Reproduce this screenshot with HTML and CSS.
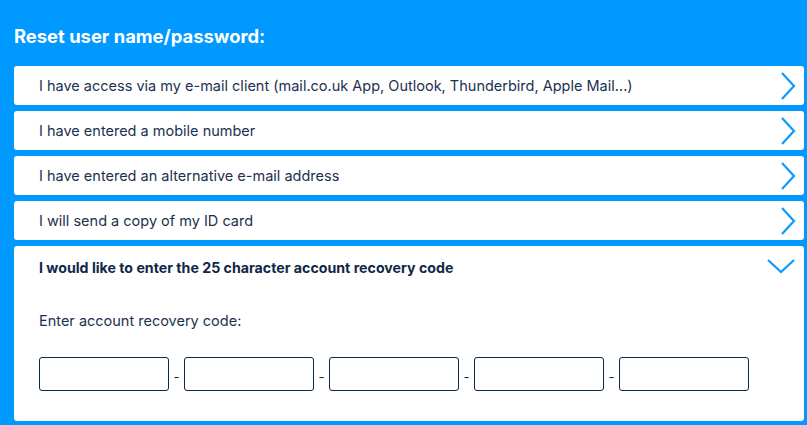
FILE: index.html
```html
<!DOCTYPE html>
<html>
<head>
<meta charset="utf-8">
<link rel="stylesheet" href="styles.css">
</head>
<body>
<div class="page">
  <h1 class="title">Reset user name/password:</h1>
  <div class="list">
    <div class="row">
      <span class="label">I have access via my e-mail client (mail.co.uk App, Outlook, Thunderbird, Apple Mail...)</span>
      <svg class="chev" width="16" height="28" viewBox="0 0 16 28"><path d="M2 1 L14 14 L2 27" fill="none" stroke="#0a9bff" stroke-width="2.2"/></svg>
    </div>
    <div class="row">
      <span class="label">I have entered a mobile number</span>
      <svg class="chev" width="16" height="28" viewBox="0 0 16 28"><path d="M2 1 L14 14 L2 27" fill="none" stroke="#0a9bff" stroke-width="2.2"/></svg>
    </div>
    <div class="row">
      <span class="label">I have entered an alternative e-mail address</span>
      <svg class="chev" width="16" height="28" viewBox="0 0 16 28"><path d="M2 1 L14 14 L2 27" fill="none" stroke="#0a9bff" stroke-width="2.2"/></svg>
    </div>
    <div class="row">
      <span class="label">I will send a copy of my ID card</span>
      <svg class="chev" width="16" height="28" viewBox="0 0 16 28"><path d="M2 1 L14 14 L2 27" fill="none" stroke="#0a9bff" stroke-width="2.2"/></svg>
    </div>
    <div class="panel">
      <div class="panel-head">
        <span class="label bold">I would like to enter the 25 character account recovery code</span>
        <svg class="chev-down" width="28" height="16" viewBox="0 0 28 16"><path d="M1 2 L14 14 L27 2" fill="none" stroke="#0a9bff" stroke-width="2.2"/></svg>
      </div>
      <p class="prompt">Enter account recovery code:</p>
      <div class="code">
        <input class="box" type="text"><span class="dash">-</span>
        <input class="box" type="text"><span class="dash">-</span>
        <input class="box" type="text"><span class="dash">-</span>
        <input class="box" type="text"><span class="dash">-</span>
        <input class="box" type="text">
      </div>
    </div>
  </div>
</div>
</body>
</html>
```

FILE: styles.css
```css
html, body {
  margin: 0;
  padding: 0;
}
body {
  background: #0099ff;
  font-family: Inter, "Noto Sans", sans-serif;
  color: #1c3150;
}
.page {
  padding: 23px 3px 4px 14px;
}
.title {
  margin: 0 0 16px 0;
  font-size: 18.4px;
  font-weight: 700;
  color: #ffffff;
  line-height: 27px;
}
.list {
  display: flex;
  flex-direction: column;
  gap: 6px;
}
.row {
  background: #fff;
  border-radius: 3px;
  height: 39px;
  display: flex;
  align-items: center;
  justify-content: space-between;
  padding: 0 8px 0 25px;
}
.label {
  font-size: 14.5px;
  color: #1c3150;
  letter-spacing: 0;
}
.label.bold {
  font-weight: 700;
  color: #0f2748;
  font-size: 14.2px;
}
.chev {
  display: block;
}
.panel {
  background: #fff;
  border-radius: 3px;
  padding: 0 8px 30px 25px;
}
.panel-head {
  height: 42px;
  display: flex;
  align-items: center;
  justify-content: space-between;
}
.chev-down {
  display: block;
  margin-right: 1px;
  margin-top: -3px;
}
.prompt {
  margin: 24px 0 0 0;
  font-size: 14.5px;
  line-height: 18px;
  color: #1c3150;
}
.code {
  margin-top: 27px;
  display: flex;
  align-items: center;
}
.box {
  width: 130px;
  height: 34px;
  box-sizing: border-box;
  border: 1px solid #0a2850;
  border-radius: 3px;
  margin: 0;
  padding: 0 6px;
  background: #fff;
  font-family: inherit;
}
.dash {
  width: 15px;
  text-align: center;
  font-size: 13px;
  color: #0a2850;
  padding-top: 6px;
}
```
